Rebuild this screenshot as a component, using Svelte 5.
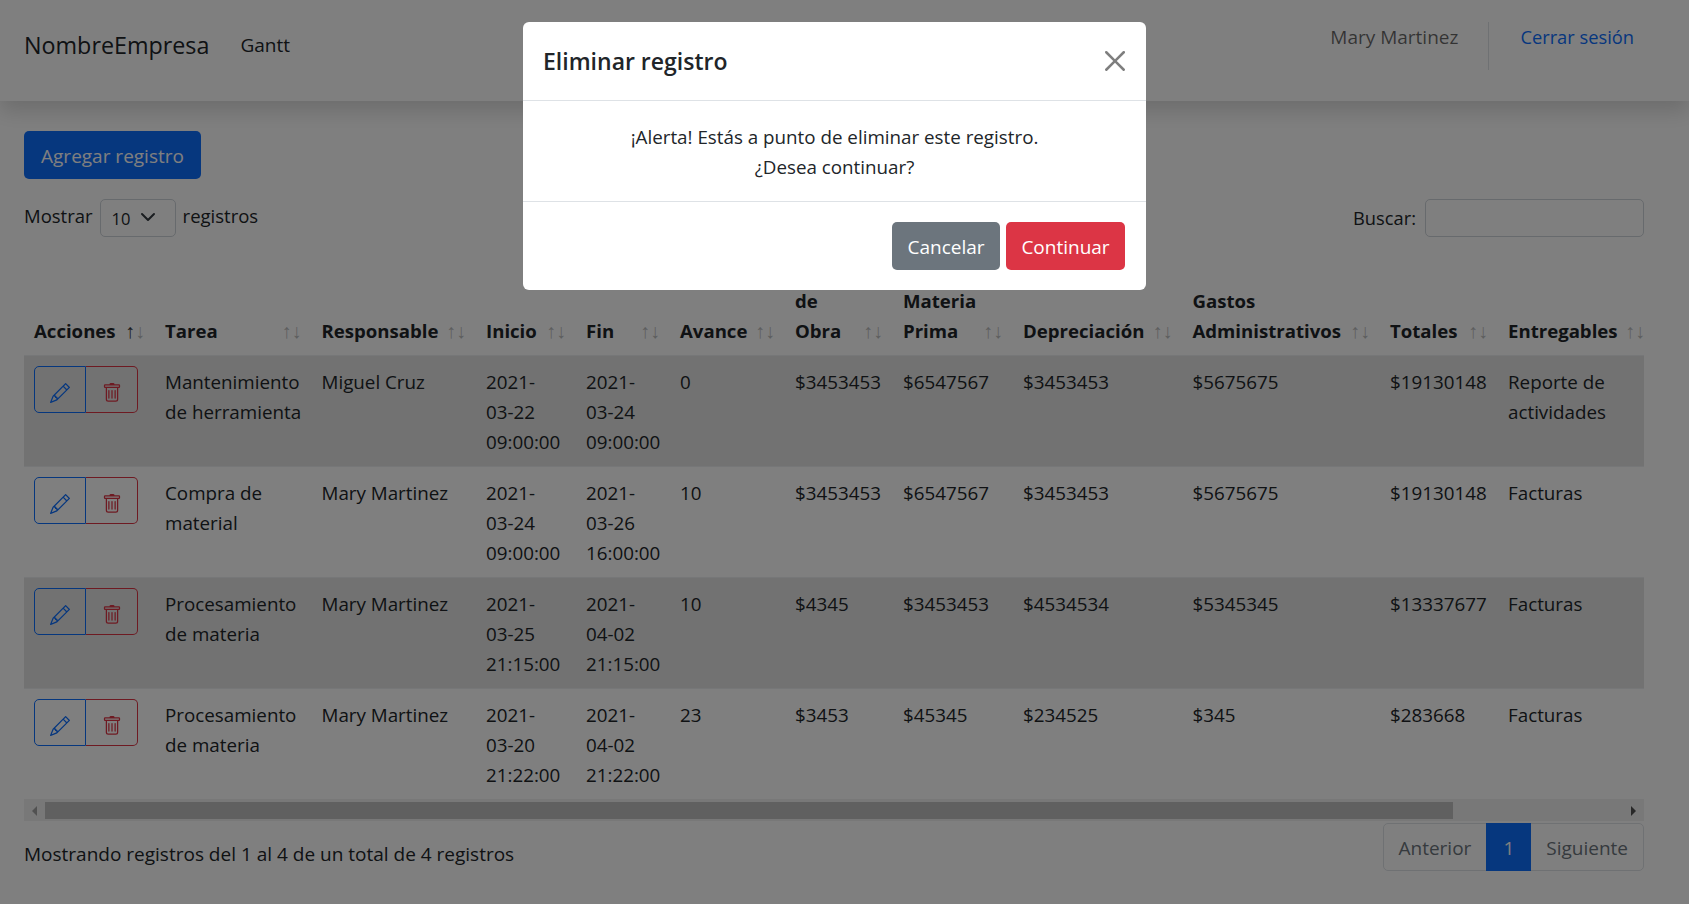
<script>
  const columns = [
    { label: ['Acciones'], width: 131, active: true },
    { label: ['Tarea'], width: 156.5 },
    { label: ['Responsable'], width: 164.5 },
    { label: ['Inicio'], width: 100 },
    { label: ['Fin'], width: 94 },
    { label: ['Avance'], width: 115 },
    { label: ['Mano', 'de', 'Obra'], width: 108 },
    { label: ['Materia', 'Prima'], width: 120 },
    { label: ['Depreciación'], width: 169.5 },
    { label: ['Gastos', 'Administrativos'], width: 197.5 },
    { label: ['Totales'], width: 118 },
    { label: ['Entregables'], width: 157 }
  ];

  const rows = [
    { tarea: 'Mantenimiento de herramienta', resp: 'Miguel Cruz', inicio: ['2021-', '03-22', '09:00:00'], fin: ['2021-', '03-24', '09:00:00'], avance: 0, mano: '$3453453', materia: '$6547567', dep: '$3453453', gastos: '$5675675', total: '$19130148', ent: 'Reporte de actividades' },
    { tarea: 'Compra de material', resp: 'Mary Martinez', inicio: ['2021-', '03-24', '09:00:00'], fin: ['2021-', '03-26', '16:00:00'], avance: 10, mano: '$3453453', materia: '$6547567', dep: '$3453453', gastos: '$5675675', total: '$19130148', ent: 'Facturas' },
    { tarea: 'Procesamiento de materia', resp: 'Mary Martinez', inicio: ['2021-', '03-25', '21:15:00'], fin: ['2021-', '04-02', '21:15:00'], avance: 10, mano: '$4345', materia: '$3453453', dep: '$4534534', gastos: '$5345345', total: '$13337677', ent: 'Facturas' },
    { tarea: 'Procesamiento de materia', resp: 'Mary Martinez', inicio: ['2021-', '03-20', '21:22:00'], fin: ['2021-', '04-02', '21:22:00'], avance: 23, mano: '$3453', materia: '$45345', dep: '$234525', gastos: '$345', total: '$283668', ent: 'Facturas' }
  ];
</script>

<nav class="navbar">
  <div class="nav-left">
    <a class="brand" href="#top">NombreEmpresa</a>
    <a class="nav-item" href="#top">Gantt</a>
  </div>
  <div class="nav-right">
    <span class="user">Mary Martinez</span>
    <span class="divider"></span>
    <a class="logout" href="#top">Cerrar sesión</a>
  </div>
</nav>

<main class="content">
  <button class="btn btn-primary">Agregar registro</button>

  <div class="filters">
    <div class="length">
      <span>Mostrar</span>
      <div class="select-wrap">
        <select>
          <option>10</option>
          <option>25</option>
          <option>50</option>
        </select>
        <svg class="chevron" viewBox="0 0 16 16" fill="none" stroke="#343a40" stroke-width="2" stroke-linecap="round" stroke-linejoin="round"><path d="M2 5l6 6 6-6" /></svg>
      </div>
      <span>registros</span>
    </div>
    <label class="search">Buscar: <input type="search" /></label>
  </div>

  <div class="table-scroll">
    <table>
      <colgroup>
        {#each columns as col}
          <col style="width: {col.width}px" />
        {/each}
        <col style="width: 184px" />
      </colgroup>
      <thead>
        <tr>
          {#each columns as col}
            <th>
              {#each col.label as line, i}
                {#if i > 0}<br />{/if}{line}
              {/each}
              <span class="sort up" class:on={col.active}>↑</span>
              <span class="sort down">↓</span>
            </th>
          {/each}
          <th></th>
        </tr>
      </thead>
      <tbody>
        {#each rows as row}
          <tr>
            <td>
              <div class="btn-group">
                <button class="icon-btn edit" aria-label="Editar">
                  <svg viewBox="0 0 16 16" width="20" height="20" fill="currentColor"><path d="M12.146.146a.5.5 0 0 1 .708 0l3 3a.5.5 0 0 1 0 .708l-10 10a.5.5 0 0 1-.168.11l-5 2a.5.5 0 0 1-.65-.65l2-5a.5.5 0 0 1 .11-.168l10-10zM11.207 2.5 13.5 4.793 14.793 3.5 12.5 1.207 11.207 2.5zm1.586 3L10.5 3.207 4 9.707V10h.5a.5.5 0 0 1 .5.5v.5h.5a.5.5 0 0 1 .5.5v.5h.293l6.5-6.5zm-9.761 5.175-.106.106-1.528 3.821 3.821-1.528.106-.106A.5.5 0 0 1 5 12.5V12h-.5a.5.5 0 0 1-.5-.5V11h-.5a.5.5 0 0 1-.468-.325z" /></svg>
                </button>
                <button class="icon-btn del" aria-label="Eliminar">
                  <svg viewBox="0 0 16 16" width="20" height="20" fill="currentColor"><path d="M5.5 5.5A.5.5 0 0 1 6 6v6a.5.5 0 0 1-1 0V6a.5.5 0 0 1 .5-.5zm2.5 0a.5.5 0 0 1 .5.5v6a.5.5 0 0 1-1 0V6a.5.5 0 0 1 .5-.5zm3 .5a.5.5 0 0 0-1 0v6a.5.5 0 0 0 1 0V6z" /><path fill-rule="evenodd" d="M14.5 3a1 1 0 0 1-1 1H13v9a2 2 0 0 1-2 2H5a2 2 0 0 1-2-2V4h-.5a1 1 0 0 1-1-1V2a1 1 0 0 1 1-1H6a1 1 0 0 1 1-1h2a1 1 0 0 1 1 1h3.5a1 1 0 0 1 1 1v1zM4.118 4 4 4.059V13a1 1 0 0 0 1 1h6a1 1 0 0 0 1-1V4.059L11.882 4H4.118zM2.5 3V2h11v1h-11z" /></svg>
                </button>
              </div>
            </td>
            <td>{row.tarea}</td>
            <td>{row.resp}</td>
            <td>{row.inicio[0]}<br />{row.inicio[1]}<br />{row.inicio[2]}</td>
            <td>{row.fin[0]}<br />{row.fin[1]}<br />{row.fin[2]}</td>
            <td>{row.avance}</td>
            <td>{row.mano}</td>
            <td>{row.materia}</td>
            <td>{row.dep}</td>
            <td>{row.gastos}</td>
            <td>{row.total}</td>
            <td>{row.ent}</td>
            <td></td>
          </tr>
        {/each}
      </tbody>
    </table>
  </div>

  <div class="scrollbar">
    <span class="arrow left"></span>
    <span class="thumb"></span>
    <span class="arrow right"></span>
  </div>

  <div class="table-foot">
    <div class="info">Mostrando registros del 1 al 4 de un total de 4 registros</div>
    <div class="pagination">
      <a class="page" href="#top">Anterior</a>
      <a class="page current" href="#top">1</a>
      <a class="page" href="#top">Siguiente</a>
    </div>
  </div>
</main>

<div class="backdrop">
  <div class="modal">
    <header class="modal-header">
      <h5>Eliminar registro</h5>
      <button class="close" aria-label="Cerrar">
        <svg viewBox="0 0 16 16" width="20" height="20" fill="#000"><path d="M.293.293a1 1 0 0 1 1.414 0L8 6.586 14.293.293a1 1 0 1 1 1.414 1.414L9.414 8l6.293 6.293a1 1 0 0 1-1.414 1.414L8 9.414l-6.293 6.293a1 1 0 0 1-1.414-1.414L6.586 8 .293 1.707a1 1 0 0 1 0-1.414z" /></svg>
      </button>
    </header>
    <div class="modal-body">
      ¡Alerta! Estás a punto de eliminar este registro.<br />
      ¿Desea continuar?
    </div>
    <footer class="modal-footer">
      <button class="btn btn-secondary">Cancelar</button>
      <button class="btn btn-danger">Continuar</button>
    </footer>
  </div>
</div>

<style>
  :global(body) {
    font-family: "Open Sans", "Noto Sans", sans-serif;
    font-size: 19px;
    line-height: 30px;
    color: #212529;
    background: #fff;
    overflow: hidden;
  }

  a {
    text-decoration: none;
  }

  .navbar {
    height: 101px;
    display: flex;
    justify-content: space-between;
    align-items: flex-start;
    padding: 0 55px 0 24px;
    background: #fff;
    box-shadow: 0 10px 20px rgba(0, 0, 0, 0.15);
    position: relative;
  }

  .nav-left {
    display: flex;
    align-items: center;
    height: 90px;
    gap: 31px;
  }

  .brand {
    font-size: 23.3px;
    color: #212529;
  }

  .nav-item {
    color: #212529;
  }

  .nav-right {
    display: flex;
    align-items: flex-start;
    padding-top: 22px;
  }

  .user {
    color: rgba(0, 0, 0, 0.6);
  }

  .divider {
    width: 1px;
    height: 48px;
    background: #dee2e6;
    margin: 0 31px 0 30px;
  }

  .logout {
    font-size: 18.3px;
    color: #0d6efd;
  }

  .content {
    padding: 30px 45px 0 24px;
  }

  .btn {
    font: inherit;
    height: 48px;
    padding: 2px 0 0;
    border: 1px solid transparent;
    border-radius: 5px;
    color: #fff;
  }

  .btn-primary {
    background: #0d6efd;
    width: 177px;
  }

  .btn-secondary {
    background: #6c757d;
    width: 108px;
  }

  .btn-danger {
    background: #dc3545;
    width: 119px;
  }

  .filters {
    display: flex;
    justify-content: space-between;
    align-items: center;
    margin-top: 20px;
    height: 38px;
  }

  .length {
    display: flex;
    align-items: center;
    gap: 7px;
    margin-top: -4px;
    font-size: 18.5px;
  }

  .select-wrap {
    position: relative;
    width: 76px;
    height: 38px;
    margin-top: 4px;
  }

  select {
    appearance: none;
    width: 100%;
    height: 100%;
    font: inherit;
    font-size: 16.5px;
    color: #212529;
    background: #fff;
    border: 1px solid #ced4da;
    border-radius: 5px;
    padding: 2px 0 0 11px;
  }

  .chevron {
    position: absolute;
    right: 20px;
    top: 10px;
    width: 16px;
    height: 16px;
    pointer-events: none;
  }

  .search {
    display: flex;
    align-items: center;
    gap: 9px;
    font-size: 18.3px;
  }

  input {
    width: 219px;
    height: 38px;
    box-sizing: border-box;
    background: #fff;
    border: 1px solid #ced4da;
    border-radius: 5px;
  }

  .table-scroll {
    margin-top: 8px;
    overflow: hidden;
  }

  table {
    table-layout: fixed;
    width: 1815px;
    border-collapse: collapse;
  }

  th {
    position: relative;
    text-align: left;
    vertical-align: bottom;
    font-size: 18.6px;
    font-weight: 700;
    padding: 11px 10px 9px;
    white-space: nowrap;
  }

  td {
    vertical-align: top;
    font-size: 18.8px;
    padding: 11px 10px 9px;
    border-top: 1px solid #eceef0;
  }

  tbody tr:nth-child(odd) td {
    background: #e4e4e4;
  }

  .sort {
    position: absolute;
    bottom: 9px;
    font-family: "Liberation Sans", sans-serif;
    font-weight: 400;
    font-size: 20px;
    opacity: 0.3;
  }

  .sort.up {
    right: 20px;
  }

  .sort.down {
    right: 10px;
  }

  .sort.on {
    opacity: 0.9;
  }

  .btn-group {
    display: flex;
    margin-top: -1px;
  }

  .icon-btn {
    width: 52px;
    height: 47px;
    padding: 7px 0 0;
    background: transparent;
    border: 1px solid;
    display: flex;
    align-items: center;
    justify-content: center;
  }

  .edit {
    color: #0d6efd;
    border-radius: 5px 0 0 5px;
  }

  .del {
    color: #dc3545;
    border-radius: 0 5px 5px 0;
    border-left: none;
  }

  .scrollbar {
    height: 22px;
    box-sizing: border-box;
    padding: 3px 0 2px;
    background: #f1f1f1;
    display: flex;
    align-items: stretch;
  }

  .thumb {
    width: 1408px;
    background: #c1c1c1;
  }

  .arrow {
    width: 21px;
    display: flex;
    align-items: center;
    justify-content: center;
  }

  .arrow::before {
    content: '';
    border-top: 5px solid transparent;
    border-bottom: 5px solid transparent;
  }

  .arrow.left::before {
    border-right: 5px solid #a3a3a3;
  }

  .arrow.right {
    margin-left: auto;
  }

  .arrow.right::before {
    border-left: 5px solid #505050;
  }

  .table-foot {
    display: flex;
    justify-content: space-between;
    align-items: flex-end;
    margin-top: 2px;
  }

  .info {
    padding-bottom: 2px;
  }

  .pagination {
    display: flex;
    height: 48px;
    border: 1px solid #dee2e6;
    border-radius: 5px;
    box-sizing: border-box;
  }

  .page {
    color: #6c757d;
    padding: 9px 15px 0;
  }

  .current {
    background: #0d6efd;
    color: #fff;
    margin: -1px 0;
    padding: 10px 17px 0;
  }

  .backdrop {
    position: fixed;
    inset: 0;
    background: rgba(0, 0, 0, 0.5);
    padding: 22px 0 0 523px;
  }

  .modal {
    width: 623px;
    height: 268px;
    background: #fff;
    border-radius: 6px;
    display: flex;
    flex-direction: column;
  }

  .modal-header {
    height: 79px;
    box-sizing: border-box;
    display: flex;
    justify-content: space-between;
    align-items: center;
    padding: 0 21px 0 20px;
    border-bottom: 1px solid #dee2e6;
  }

  h5 {
    margin: 0;
    font-size: 23px;
    font-weight: 600;
  }

  .close {
    background: none;
    border: none;
    padding: 0;
    opacity: 0.5;
    display: flex;
  }

  .modal-body {
    height: 101px;
    box-sizing: border-box;
    padding: 21px 20px 0;
    font-size: 18.8px;
    text-align: center;
    border-bottom: 1px solid #dee2e6;
  }

  .modal-footer {
    display: flex;
    justify-content: flex-end;
    gap: 6px;
    padding: 20px 21px 0 0;
  }
</style>
